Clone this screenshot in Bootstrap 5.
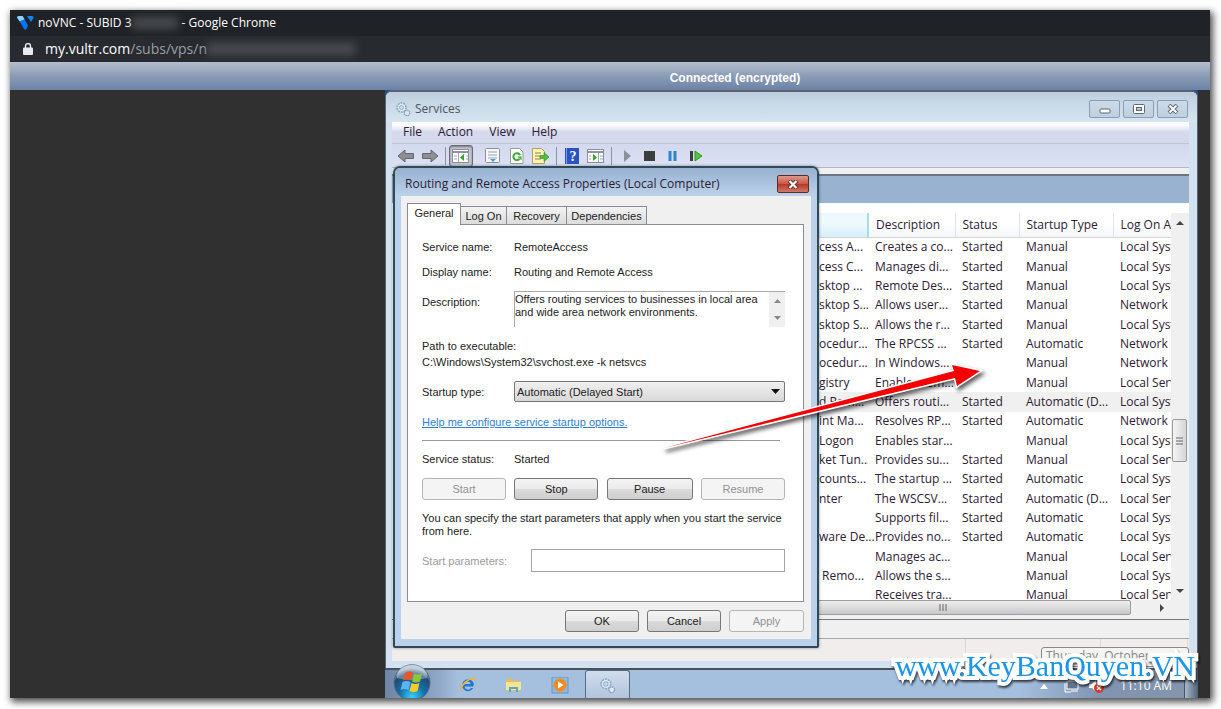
<!DOCTYPE html>
<html lang="en">
<head>
<meta charset="utf-8">
<meta name="viewport" content="width=device-width, initial-scale=1">
<title>noVNC - Google Chrome</title>
<link href="https://cdn.jsdelivr.net/npm/bootstrap@5.3.0/dist/css/bootstrap.min.css" rel="stylesheet">
<style>
:root{--ui:"Open Sans","Noto Sans",sans-serif;--classic:"Liberation Sans",Arial,sans-serif;--ink:#2d2033}
body{background:#fff;padding:10px 11px 10px 10px;font:12px/16px var(--ui);color:var(--ink)}
button,input,select,textarea{font:inherit;color:inherit;margin:0}
svg{display:block;flex:none}
.browser{background:#303030;box-shadow:2px 3px 7px 1px rgba(0,0,0,.7)}
.tabline{height:26px;background:#1f2226;color:#fff;padding-left:7px;line-height:24px;font-size:12px}
.addr{height:26px;background:#272a2e;color:#fff;padding-left:13px;font-size:14px}
.addr a{color:#fff;text-decoration:none}
.addr a span{color:#9aa0a6}
.smudge{height:12px;background:#55585c;filter:blur(4px);opacity:.75}
.conn{height:28px;padding-left:250px;background:linear-gradient(#b3becd,#8b9cb5 50%,#6c82a6);color:#fff;font:bold 12px/33px var(--classic)}
.viewer{display:grid;grid-template-columns:375fr 813fr 12px}
.remote{grid-column:2;background:#1c4f9c}
.svc{border:1px solid #59626e;border-top:2px solid #59626e;border-bottom:0;border-radius:7px 7px 0 0;background:#d3e2f0;padding:0 8px 7px 6px}
.cap{height:30px;background:linear-gradient(#bdcfdf,#d6e5f0);margin:0 -8px 0 -6px;padding:3px 9px 0 9px;border-radius:5px 5px 0 0;color:#4d5560}
.wbtn{width:31px;height:18px;border:1px solid #8d9db2;border-radius:2px;background:linear-gradient(#ccdbe8,#bfcfdf);padding:0}
.menus{height:22px;background:linear-gradient(#fdfdfe 15%,#d6daec 45%,#d3d8ec);padding-left:3px;border-bottom:1px solid #bfc3d0}
.menus button{border:0;background:none;padding:0 8px;height:20px}
.tools{height:24px;background:linear-gradient(#d3d9ee,#dde1f4);border-bottom:1px solid #b3b8c4;padding:0 2px}
.tools button{width:24px;height:22px;border:0;background:none;padding:0;display:flex;align-items:center;justify-content:center}
.tools .on{border:1px solid #6b6b78;border-radius:3px;background:#c5c8d4;box-shadow:inset 0 1px 2px #777}
.tools i{width:1px;height:18px;background:#8f93a0;margin:0 3px}
.bandwrap{background:#f0f0f0;padding-top:6px}
.band{height:29px;background:#98b2d0;border-top:2px solid #6d7680}
.panes{height:397px;background:#fff;padding-top:10px;display:flex;overflow:hidden}
.tree{flex:0 0 426px}
.svclist{flex:1;min-width:0;overflow:hidden}
.svclist table{width:100%;table-layout:fixed;height:392px}
.svclist th{height:24px;font-weight:400;padding:0 0 0 7px;border-right:1px solid #e2e5e9;border-bottom:1px solid #d5d5d5;background:linear-gradient(#fff 45%,#f4f6f8)}
.svclist th:first-child{background:linear-gradient(#eef9fd 45%,#d5eefa);border-right:2px solid #a5dcee}
.svclist td{padding:0 0 0 7px;line-height:16px;white-space:nowrap;overflow:hidden}
.svclist td:first-child{padding-left:1px}
.svclist .sel td{background:#f0f0f0}
.vbar{flex:0 0 18px;background:#f0f0f0;padding:8px 2px 7px 1px}
.thumbv{width:15px;height:43px;border:1px solid #999;border-radius:2px;background:linear-gradient(90deg,#f5f5f5,#d5d5d8);margin-bottom:127px}
.hbar{height:15px;background:#f0f0f0;padding-left:426px;padding-right:25px}
.hbar div{height:15px;flex:1;border:1px solid #9c9c9c;border-radius:2px;background:linear-gradient(#eee,#c8c8cc)}
.strip{height:24px;background:#f0f0f0;padding-top:4px;border-bottom:1px solid #aaa}
.strip div{border-top:1px solid #777}
.statusline{height:22px;background:#f1edec;padding-right:1px}
.statusline span{border-right:1px solid #dcd6d8}
.taskbar{height:30px;border-top:2px solid #49535f;background:linear-gradient(90deg,#6f86a6,#8ba2c2 6%,#a5bfde 9%,#a5bfde 78%,#7f94b0 88%,#8496ad)}
.taskbar button{border:0;background:none;padding:2px 0 0;display:flex;align-items:center;justify-content:center;height:28px;width:46px}
.taskbar .open{border:1px solid #5a6c84;border-bottom:0;border-radius:3px 3px 0 0;background:linear-gradient(#d0ddec,#b2c5dd);width:45px}
.orb{left:8px;bottom:0}
.tray{color:#fff;font-size:12px}
.tray>span,.tray>svg{margin-top:4px}
.deskbtn{width:14px;height:28px;background:linear-gradient(90deg,#a9b9cc,#4f6279);border-left:1px solid #45566a}
.dlg{left:8px;top:76px;width:426px;border:2px solid #2c4a58;border-radius:7px 7px 2px 2px;background:#b9d1ea;padding:0 6px 7px;box-shadow:0 0 3px rgba(0,0,0,.45)}
.dlgcap{height:28px;margin:0 -6px;padding:4px 8px 0 10px;border-radius:5px 5px 0 0;background:linear-gradient(#97b1d0,#bbd2ea)}
.closer{width:32px;height:18px;border:1px solid #5e2a2a;border-radius:2px;padding:0;background:linear-gradient(#dc9a8c,#cb5846 48%,#b5392a 52%,#d07a68)}
.client{background:#f0f0f0;font:11px/14px var(--classic);color:#222;padding:7px 7px 7px 6px}
.tabs button{height:18px;border:1px solid #898c95;border-bottom:0;border-left-width:0;background:linear-gradient(#f3f3f3,#dcdcdc);padding:0}
.tabs .cur{height:22px;width:54px;border-left-width:1px;background:#fff;margin-bottom:-1px;position:relative;padding-bottom:3px}
.sheet{border:1px solid #898c95;background:#fff;padding:15px 18px 29px 14px}
.fld{display:grid;grid-template-columns:92px 1fr}
.cbtn{height:22px;border:1px solid #777;border-radius:3px;background:linear-gradient(#f3f3f3,#ebebeb 48%,#dadada 52%,#cfcfcf);padding:0;text-align:center}
.cbtn:disabled{border-color:#b5b5b5;background:#f4f4f4;color:#929292}
.descbox{height:36px;border-top:1px solid #aaa;border-left:1px solid #aaa}
.descbox textarea{border:0;padding:1px 0 0;margin:0;height:34px;resize:none;overflow:hidden;background:none;line-height:13px;outline:0;white-space:pre}
.mini{width:16px;background:#f0f0f0;padding:7px 0}
.pick select{appearance:none;width:100%;height:21px;border:1px solid #777;border-radius:2px;background:linear-gradient(#f0f0f0,#d8d8d8);padding:0 2px}
.pick svg{right:5px;top:8px;pointer-events:none}
.rule{height:1px;background:#999;margin-right:5px}
.plink{color:#2f7fd6}
.params{border:1px solid #a5a5a5;background:#fff;height:23px;width:254px}
.arrowmark{left:270px;top:259px;pointer-events:none}
.tipdate{right:9px;bottom:31px;width:148px;height:20px;border:1px solid #888;border-radius:3px;background:#f4f4f4;color:#888;padding:0 4px}
.sitemark{right:3px;bottom:14px;font:30px/36px "Liberation Serif",serif;color:#1b95e8;-webkit-text-stroke:8px #fff;stroke-linejoin:round;paint-order:stroke fill;filter:drop-shadow(1px 2px 1px rgba(0,0,0,.7));white-space:nowrap}
</style>
<script src="https://cdn.jsdelivr.net/npm/bootstrap@5.3.0/dist/js/bootstrap.bundle.min.js"></script>
</head>
<body>
<svg width="0" height="0" class="position-absolute">
<symbol id="gear" viewBox="0 0 16 16"><circle cx="6.500" cy="6.500" r="4.500" fill="#e3eef7" stroke="#8aa9c4" stroke-width="1.600" stroke-dasharray="2 .8"/><circle cx="6.500" cy="6.500" r="2" fill="#cfe0ef" stroke="#8fb0cc"/><circle cx="12" cy="12" r="2.700" fill="#dfeaf3" stroke="#83a0ba" stroke-width="1.300" stroke-dasharray="1.500 .6"/></symbol>
</svg>
<div class="browser">
  <div class="tabline d-flex align-items-center">
    <svg width="17" height="15" viewBox="0 0 17 15"><path d="M0 1.500Q0 0 2 0h3.500l5 8.500-2.500 5z" fill="#0a84ff"/><path d="M0 1.500Q0 0 2 0h3.500l2 3.300-5 2z" fill="#8fd0ff"/><path d="M10 0h5q2 0 1.500 2L14 6 10.500 1z" fill="#0a84ff"/><path d="M3 5.500 7 13q1.200 1.500 2.400 0l1.600-3-3.500-6z" fill="#0a72f5"/></svg>
    <span class="ms-1">noVNC - SUBID 3</span><span class="smudge" style="width:46px"></span><span class="ms-1">- Google Chrome</span>
  </div>
  <div class="addr d-flex align-items-center">
    <svg width="10" height="12" viewBox="0 0 10 12"><rect y="4.500" width="10" height="7.500" rx="1" fill="#e8eaed"/><path d="M2.500 5V3a2.500 2.500 0 0 1 5 0v2" fill="none" stroke="#e8eaed" stroke-width="1.400"/></svg>
    <a href="#" class="ms-2 ps-1">my.vultr.com<span>/subs/vps/n</span></a><span class="smudge" style="width:148px"></span>
  </div>
  <div class="conn text-center">Connected (encrypted)</div>

  <main class="viewer">
    <div class="remote position-relative">
      <section class="svc">
        <div class="cap d-flex align-items-center">
          <svg width="16" height="16"><use href="#gear"/></svg><span class="ms-1 me-auto">Services</span>
          <div class="d-flex" style="gap:3px">
            <button class="wbtn" aria-label="Minimize"><svg class="m-auto" width="12" height="10"><rect x="1" y="5" width="10" height="4" rx="1" fill="#fff" stroke="#5d6673"/></svg></button>
            <button class="wbtn" aria-label="Maximize"><svg class="m-auto" width="12" height="10"><rect x=".5" y=".5" width="11" height="9" rx="1" fill="#fff" stroke="#5d6673"/><rect x="3.500" y="3.500" width="5" height="3" fill="#b9c6d4" stroke="#5d6673"/></svg></button>
            <button class="wbtn" aria-label="Close"><svg class="m-auto" width="12" height="10"><path d="m2 1 8 8m0-8-8 8" stroke="#5d6673" stroke-width="4"/><path d="m2.500 1.500 7 7m0-7-7 7" stroke="#fff" stroke-width="2"/></svg></button>
          </div>
        </div>
        <nav class="menus d-flex"><button>File</button><button>Action</button><button>View</button><button>Help</button></nav>
        <div class="tools d-flex align-items-center">
          <button aria-label="Back"><svg width="18" height="14"><path d="M1 7 8 1v3.500h8.500v5H8V13z" fill="#8c9094" stroke="#63676b"/></svg></button>
          <button aria-label="Forward"><svg width="18" height="14"><path d="M17 7 10 1v3.500H1.500v5H10V13z" fill="#8c9094" stroke="#63676b"/></svg></button>
          <i></i>
          <button class="on" aria-label="Console tree"><svg width="18" height="16"><rect x=".5" y="1.500" width="16" height="13" fill="#fff" stroke="#8b8f99"/><path d="M1 4h15" stroke="#8b93a5" stroke-width="2"/><path d="M6.500 5v9M2 8h3M2 11h3M14 8h2M14 11h2" stroke="#9aa"/><path d="m12 6v7l-4-3.500z" fill="#35a52a"/></svg></button>
          <button class="ms-2" aria-label="Properties"><svg width="16" height="16"><rect x=".5" y=".5" width="14" height="14" rx="1" fill="#f6f7fa" stroke="#8b8f99"/><path d="M3 4h9M3 7h9M3 10h9" stroke="#98a2b3"/><path d="m5 11h6l-3 3z" fill="#4aa3d8"/></svg></button>
          <button aria-label="Refresh"><svg width="14" height="16"><path d="M.5.500h9l3.500 3.500v11.500H.5z" fill="#fff" stroke="#9a9a9a"/><path d="M9.500 11a3.500 3.500 0 1 1 .5-4" fill="none" stroke="#37ad2c" stroke-width="2"/><path d="m7.500 8.500h4v4z" fill="#37ad2c"/></svg></button>
          <button aria-label="Export list"><svg width="18" height="16"><path d="M.5.500h9l3 3v12H.5z" fill="#fdf3b4" stroke="#b1a35c"/><path d="M3 5h6M3 8h5M3 11h6" stroke="#93834a"/><path d="M8 7.500h4V4.500l5 4.500-5 4.500v-3H8z" fill="#4cc03c" stroke="#2c9222" stroke-width=".6"/></svg></button>
          <i></i>
          <button aria-label="Help"><svg width="14" height="16"><rect width="14" height="16" fill="#2a52c4"/><path d="M1.500 0v16" stroke="#7d9bef"/><text x="8" y="13" font-size="14" font-family="Liberation Serif" font-weight="bold" fill="#fff" text-anchor="middle">?</text></svg></button>
          <button aria-label="Action pane"><svg width="18" height="14"><rect x=".5" y=".5" width="16" height="13" fill="#fff" stroke="#8b8f99"/><path d="M1 3h15" stroke="#8b93a5" stroke-width="2"/><path d="M11.500 4v9M13 7h3M13 10h3M2 7h2M2 10h2" stroke="#9aa"/><path d="M6 5v7l4-3.500z" fill="#35a52a"/></svg></button>
          <i></i>
          <button aria-label="Start service"><svg width="9" height="12"><path d="M1 0v12l7-6z" fill="#8d9095"/></svg></button>
          <button style="width:21px" aria-label="Stop service"><svg width="11" height="10"><rect width="11" height="10" fill="#3d3d40"/></svg></button>
          <button aria-label="Pause service"><svg width="9" height="10"><path d="M2 0v10M7 0v10" stroke="#2b86d2" stroke-width="3"/></svg></button>
          <button aria-label="Restart service"><svg width="13" height="12"><rect x="0" y="1" width="3" height="10" fill="#3d3d40"/><path d="M5 1v10l7-5z" fill="#55c43a" stroke="#2b9a1c"/></svg></button>
        </div>
        <div class="bandwrap"><div class="band"></div></div>
        <div class="panes">
          <div class="tree"></div>
          <div class="svclist">
            <table>
              <colgroup><col><col style="width:87px"><col style="width:64px"><col style="width:94px"><col style="width:58px"></colgroup>
              <thead><tr><th></th><th>Description</th><th>Status</th><th>Startup Type</th><th class="border-end-0 text-nowrap overflow-hidden">Log On A</th></tr></thead>
              <tbody>
              <tr><td>cess A...</td><td>Creates a co...</td><td>Started</td><td>Manual</td><td>Local Syst</td></tr>
              <tr><td>cess C...</td><td>Manages di...</td><td>Started</td><td>Manual</td><td>Local Syst</td></tr>
              <tr><td>sktop ...</td><td>Remote Des...</td><td>Started</td><td>Manual</td><td>Local Syst</td></tr>
              <tr><td>sktop S...</td><td>Allows user...</td><td>Started</td><td>Manual</td><td>Network S</td></tr>
              <tr><td>sktop S...</td><td>Allows the r...</td><td>Started</td><td>Manual</td><td>Local Syst</td></tr>
              <tr><td>ocedur...</td><td>The RPCSS ...</td><td>Started</td><td>Automatic</td><td>Network S</td></tr>
              <tr><td>ocedur...</td><td>In Windows...</td><td></td><td>Manual</td><td>Network S</td></tr>
              <tr><td>gistry</td><td>Enables rem...</td><td></td><td>Manual</td><td>Local Serv</td></tr>
              <tr class="sel"><td>d Rem...</td><td>Offers routi...</td><td>Started</td><td>Automatic (D...</td><td>Local Syst</td></tr>
              <tr><td>int Ma...</td><td>Resolves RP...</td><td>Started</td><td>Automatic</td><td>Network S</td></tr>
              <tr><td>Logon</td><td>Enables star...</td><td></td><td>Manual</td><td>Local Syst</td></tr>
              <tr><td>ket Tun...</td><td>Provides su...</td><td>Started</td><td>Manual</td><td>Local Serv</td></tr>
              <tr><td>counts...</td><td>The startup ...</td><td>Started</td><td>Automatic</td><td>Local Syst</td></tr>
              <tr><td>nter</td><td>The WSCSV...</td><td>Started</td><td>Automatic (D...</td><td>Local Serv</td></tr>
              <tr><td></td><td>Supports fil...</td><td>Started</td><td>Automatic</td><td>Local Syst</td></tr>
              <tr><td class="overflow-visible">ware De...</td><td>Provides no...</td><td>Started</td><td>Automatic</td><td>Local Syst</td></tr>
              <tr><td></td><td>Manages ac...</td><td></td><td>Manual</td><td>Local Serv</td></tr>
              <tr><td>&nbsp;Remo...</td><td>Allows the s...</td><td></td><td>Manual</td><td>Local Syst</td></tr>
              <tr><td></td><td>Receives tra...</td><td></td><td>Manual</td><td>Local Serv</td></tr>
              </tbody>
            </table>
          </div>
          <div class="vbar d-flex flex-column align-items-center">
            <svg width="8" height="4" class="mb-auto"><path d="M4 0 8 4H0z" fill="#444"/></svg>
            <div class="thumbv d-flex align-items-center justify-content-center"><svg width="7" height="8"><path d="M0 1h7M0 4h7M0 7h7" stroke="#666"/></svg></div>
            <svg width="8" height="4"><path d="M4 4 8 0H0z" fill="#444"/></svg>
          </div>
        </div>
        <div class="hbar d-flex align-items-center"><div class="d-flex align-items-center justify-content-center"><svg width="8" height="7" style="margin-right:63px"><path d="M1 0v7M4 0v7M7 0v7" stroke="#666"/></svg></div><span style="width:29px"></span><svg width="4" height="8"><path d="M0 0 4 4 0 8z" fill="#444"/></svg></div>
        <div class="strip"><div></div></div>
        <div class="statusline d-flex justify-content-end"><span style="width:200px"></span><span style="width:135px"></span><span style="width:87px"></span></div>
      </section>

      <footer class="taskbar d-flex align-items-center">
        <button class="ms-5" style="width:69px" aria-label="Internet Explorer"><svg width="18" height="18" viewBox="0 0 18 18"><path d="M14 10.500H5.500a3.600 3.600 0 0 0 6.500 1.600h2.300A6 6 0 1 1 15 8.500zM5.700 8h6.100a3.100 3.100 0 0 0-6.100 0z" fill="#2177d8"/><path d="M2 16c-4-3 4-14 13-14.500 2 0 2 2 1 4 0-4-5-2-8 .500-4 3.500-7 8-6 10z" fill="#f0b72d"/></svg></button>
        <button style="width:23px" aria-label="Explorer"><svg width="17" height="16"><path d="M1 2h6l1 2h7v10H1z" fill="#e5be54"/><path d="M1 5h15v8H1z" fill="#f8e48e"/><path d="M4 15v-5h9v5h-2v-3H6v3z" fill="#58a6d6"/></svg></button>
        <button style="width:69px" aria-label="Media Player"><svg width="18" height="17"><rect x="1" width="16" height="16" fill="#8dbbe0" stroke="#6795bd"/><circle cx="9" cy="8" r="6.500" fill="#f38a1d"/><path d="M7 4.500v7L12.500 8z" fill="#fff"/></svg></button>
        <button class="open me-auto" style="margin-left:-9px" aria-label="Services"><svg width="17" height="17"><use href="#gear"/></svg></button>
        <div class="tray d-flex align-items-center">
          <svg width="8" height="5"><path d="M4 0 8 5H0z" fill="#fff"/></svg>
          <svg width="16" height="14" class="ms-3"><rect x="3" y="2" width="11" height="8" fill="#60748c" stroke="#fff"/><path d="M1 4v9h6M7 12h7" stroke="#fff" fill="none"/></svg>
          <svg width="16" height="14" class="ms-2 me-3"><path d="M1 5h3l4-4v12L4 9H1z" fill="#fff"/><circle cx="11" cy="9" r="5" fill="#d93528"/><path d="m9 7 4 4m0-4-4 4" stroke="#fff" stroke-width="1.500"/></svg>
          <span class="me-2 pe-1">11:10 AM</span><div class="deskbtn"></div>
        </div>
      </footer>
      <svg class="orb position-absolute" width="38" height="34" viewBox="0 0 38 34"><defs><radialGradient id="o" cx=".5" cy=".9" r=".8"><stop offset="0" stop-color="#36d3f5"/><stop offset=".45" stop-color="#156ea6"/><stop offset=".8" stop-color="#234a72"/><stop offset="1" stop-color="#a7bdd0"/></radialGradient></defs><circle cx="19" cy="18.500" r="18" fill="url(#o)" stroke="#4b6a83"/><path d="M4 14a15 15 0 0 1 30 0q-15 4-30 0z" fill="#fff" opacity=".3"/><path d="M12 9q4-3 8-.500l-2 8q-4-2-8 0z" fill="#e8572b"/><path d="M21 9.500q4 2 8 0l-2 8q-4 2-8 0z" fill="#8cc63c"/><path d="M9.500 18q4-2 8 0l-2 8q-4-2-8 0z" fill="#5db3ee"/><path d="M18.500 19q4 2 8 0l-2 8q-4 2-8 0z" fill="#fcca2c"/></svg>

      <section class="dlg position-absolute">
        <div class="dlgcap d-flex align-items-center"><span class="me-auto">Routing and Remote Access Properties (Local Computer)</span>
          <button class="closer" aria-label="Close dialog"><svg class="m-auto" width="12" height="9"><path d="m2 .500 8 8m0-8-8 8" stroke="#6b302b" stroke-width="4"/><path d="m2.500 1 7 7m0-7-7 7" stroke="#fff" stroke-width="2.200"/></svg></button></div>
        <div class="client">
          <div class="tabs d-flex align-items-end">
            <button class="cur">General</button><button style="width:46px">Log On</button><button style="width:60px">Recovery</button><button style="width:80px">Dependencies</button>
          </div>
          <div class="sheet">
            <div class="fld"><span>Service name:</span><span>RemoteAccess</span></div>
            <div class="fld" style="margin-top:11px"><span>Display name:</span><span>Routing and Remote Access</span></div>
            <div class="fld" style="margin-top:12px"><label for="d" class="pt-1">Description:</label>
              <div class="descbox d-flex"><textarea id="d" class="flex-fill" readonly>Offers routing services to businesses in local area
and wide area network environments.</textarea>
                <div class="mini d-flex flex-column align-items-center justify-content-between"><svg width="7" height="4"><path d="M3.500 0 7 4H0z" fill="#888"/></svg><svg width="7" height="4"><path d="M3.500 4 7 0H0z" fill="#888"/></svg></div></div></div>
            <div style="margin-top:11px;line-height:16px">Path to executable:<br>C:\Windows\System32\svchost.exe -k netsvcs</div>
            <div class="fld align-items-center" style="margin-top:11px"><label for="s">Startup type:</label>
              <div class="pick position-relative"><select id="s"><option>Automatic (Delayed Start)</option></select><svg class="position-absolute" width="9" height="5"><path d="M0 0h9L4.500 5z" fill="#111"/></svg></div></div>
            <div style="margin-top:13px"><a class="plink" href="#">Help me configure service startup options.</a></div>
            <div class="rule" style="margin-top:11px"></div>
            <div class="fld" style="margin-top:11px"><span>Service status:</span><span>Started</span></div>
            <div class="d-flex justify-content-between" style="margin-top:12px"><button class="cbtn" style="width:84px" disabled>Start</button><button class="cbtn" style="width:84px">Stop</button><button class="cbtn" style="width:86px">Pause</button><button class="cbtn" style="width:84px" disabled>Resume</button></div>
            <div style="margin-top:12px;line-height:13px;margin-right:-8px">You can specify the start parameters that apply when you start the service<br>from here.</div>
            <div class="d-flex justify-content-between align-items-center" style="margin-top:11px"><label for="p" style="color:#9c9c9c">Start parameters:</label><input id="p" class="params" disabled></div>
          </div>
          <div class="d-flex justify-content-end gap-2" style="margin-top:8px"><button class="cbtn" style="width:74px">OK</button><button class="cbtn" style="width:74px">Cancel</button><button class="cbtn" style="width:75px" disabled>Apply</button></div>
        </div>
      </section>
      <svg class="arrowmark position-absolute" width="340" height="110" viewBox="0 0 340 110"><path d="M9 99 299 22 297 16 325 22 302 37 300 29z" fill="#f40000" stroke="#fff" stroke-width="3" paint-order="stroke" style="filter:drop-shadow(2px 3px 2px rgba(0,0,0,.65))"/></svg>
      <div class="tipdate position-absolute">Thursday, October</div>
      <div class="sitemark position-absolute">www.KeyBanQuyen.VN</div>
    </div>
  </main>
</div>
</body>
</html>
